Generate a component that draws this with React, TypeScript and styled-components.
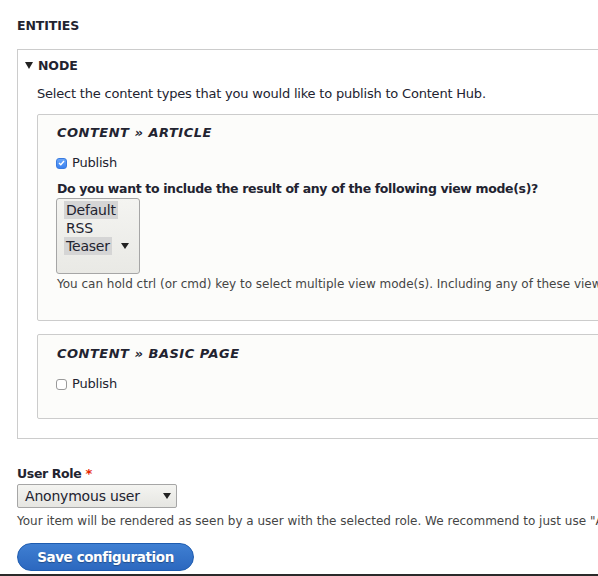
import { createGlobalStyle, styled } from 'styled-components'

const GlobalStyle = createGlobalStyle`
  html, body {
    margin: 0;
    padding: 0;
    background: #fff;
    overflow: hidden;
  }
  body {
    font-family: "DejaVu Sans", "Lucida Grande", sans-serif;
    font-size: 13px;
    line-height: 18px;
    letter-spacing: -0.2px;
    color: #222330;
  }
`

const Page = styled.div`
  width: 1000px;
  height: 576px;
  padding: 17px 0 0 17px;
  box-sizing: border-box;
  display: flex;
  flex-direction: column;
  align-items: flex-start;
`

const Strong = styled.div`
  font-weight: bold;
  font-size: 12.5px;
  letter-spacing: -0.35px;
`

const SectionTitle = styled(Strong)`
  text-transform: uppercase;
  line-height: 18px;
  letter-spacing: -0.1px;
`

const Details = styled.div`
  margin-top: 14px;
  width: 900px;
  border: 1px solid #ccc;
  background: #fff;
  padding: 7px 0 19px;
`

const Summary = styled(Strong)`
  display: flex;
  align-items: center;
  gap: 5px;
  padding-left: 7px;
  text-transform: uppercase;
  letter-spacing: -0.1px;
`

const Caret = styled.span`
  width: 0;
  height: 0;
  border-left: 4px solid transparent;
  border-right: 4px solid transparent;
  border-top: 7px solid #222;
  margin-top: -2px;
`

const DetailsBody = styled.div`
  padding: 10px 0 0 19px;
  display: flex;
  flex-direction: column;
  gap: 13px;
`

const Intro = styled.div`
  margin-bottom: -2px;
`

const Fieldset = styled.div<{ $tight?: boolean }>`
  border: 1px solid #ccc;
  border-radius: 2px;
  background: #fcfcfa;
  padding: ${(p) => (p.$tight ? '10px 0 25px 19px' : '9px 0 27px 19px')};
`

const Legend = styled.div`
  font-weight: bold;
  font-style: italic;
  text-transform: uppercase;
  letter-spacing: 0.5px;
  margin-bottom: 12px;
`

const CheckRow = styled.label`
  display: flex;
  align-items: center;
  gap: 5px;
`

const Box = styled.span<{ $checked?: boolean }>`
  width: 11px;
  height: 11px;
  box-sizing: border-box;
  border-radius: 3px;
  display: inline-flex;
  align-items: center;
  justify-content: center;
  background: ${(p) => (p.$checked ? 'linear-gradient(#6aa6f8, #3b82f0)' : '#fff')};
  border: 1px solid ${(p) => (p.$checked ? '#3a7be0' : '#9a9a9a')};
  margin-left: -1px;
`

const FieldLabel = styled(Strong)`
  margin-top: 8px;
`

const MultiSelect = styled.div`
  width: 84px;
  height: 76px;
  box-sizing: border-box;
  border: 1px solid #a6a6a6;
  border-radius: 3px;
  background: linear-gradient(#f4f4f1, #e9e9e5);
  padding: 2px 0 0 7px;
  margin-left: -1px;
  font-size: 14px;
`

const Option = styled.div<{ $selected?: boolean }>`
  display: inline-block;
  line-height: 18px;
  padding: 0 2px;
  background: ${(p) => (p.$selected ? '#d5d5d5' : 'transparent')};
`

const OptionRow = styled.div`
  display: flex;
  align-items: center;
`

const Arrow = styled.span`
  width: 0;
  height: 0;
  border-left: 4px solid transparent;
  border-right: 4px solid transparent;
  border-top: 6px solid #222;
`

const ListArrow = styled(Arrow)`
  margin-left: 9px;
`

const Description = styled.div<{ $gap?: number }>`
  font-size: 12px;
  letter-spacing: 0;
  color: #454545;
  margin-top: ${(p) => p.$gap ?? 1}px;
  white-space: nowrap;
`

const RoleLabel = styled(Strong)`
  margin-top: 26px;
`

const Required = styled.span`
  color: #e62600;
  margin-left: 4px;
  font-size: 13px;
`

const Select = styled.div`
  margin-top: 1px;
  width: 160px;
  height: 24px;
  box-sizing: border-box;
  border: 1px solid #a6a6a6;
  border-radius: 2px;
  background: linear-gradient(#f4f4f1, #e6e6e2);
  display: flex;
  align-items: center;
  justify-content: space-between;
  padding: 0 5px 0 7px;
  font-size: 14px;
`

const SaveButton = styled.button`
  margin-top: 13px;
  width: 177px;
  height: 28px;
  border: 1px solid #1e5cb0;
  border-radius: 14px;
  background: linear-gradient(#3f7fd2, #2c68bf);
  color: #fff;
  font-family: "DejaVu Sans", "Lucida Grande", sans-serif;
  font-size: 13.5px;
  letter-spacing: -0.4px;
  font-weight: bold;
  text-shadow: 0 1px 1px rgba(0, 0, 0, 0.3);
  padding: 0;
`

const BottomEdge = styled.div`
  margin-top: auto;
  margin-left: -17px;
  width: 1000px;
  height: 2px;
  background: #2a2a2a;
`

export default function App() {
  return (
    <>
      <GlobalStyle />
      <Page>
        <SectionTitle>Entities</SectionTitle>
        <Details>
          <Summary>
            <Caret />
            Node
          </Summary>
          <DetailsBody>
            <Intro>Select the content types that you would like to publish to Content Hub.</Intro>
            <Fieldset>
              <Legend>Content » Article</Legend>
              <CheckRow>
                <Box $checked>
                  <svg width="7" height="6" viewBox="0 0 7 6">
                    <path d="M1 3l1.8 1.8L6 1" fill="none" stroke="#fff" strokeWidth="1.4" />
                  </svg>
                </Box>
                Publish
              </CheckRow>
              <FieldLabel>Do you want to include the result of any of the following view mode(s)?</FieldLabel>
              <MultiSelect>
                <OptionRow>
                  <Option $selected>Default</Option>
                </OptionRow>
                <OptionRow>
                  <Option>RSS</Option>
                </OptionRow>
                <OptionRow>
                  <Option $selected>Teaser</Option>
                  <ListArrow />
                </OptionRow>
              </MultiSelect>
              <Description>
                You can hold ctrl (or cmd) key to select multiple view mode(s). Including any of these view modes is usually done in combination with Personalization.
              </Description>
            </Fieldset>
            <Fieldset $tight>
              <Legend>Content » Basic page</Legend>
              <CheckRow>
                <Box />
                Publish
              </CheckRow>
            </Fieldset>
          </DetailsBody>
        </Details>
        <RoleLabel>
          User Role<Required>*</Required>
        </RoleLabel>
        <Select>
          Anonymous user
          <Arrow />
        </Select>
        <Description $gap={4}>
          Your item will be rendered as seen by a user with the selected role. We recommend to just use "Anonymous" here.
        </Description>
        <SaveButton>Save configuration</SaveButton>
        <BottomEdge />
      </Page>
    </>
  )
}
